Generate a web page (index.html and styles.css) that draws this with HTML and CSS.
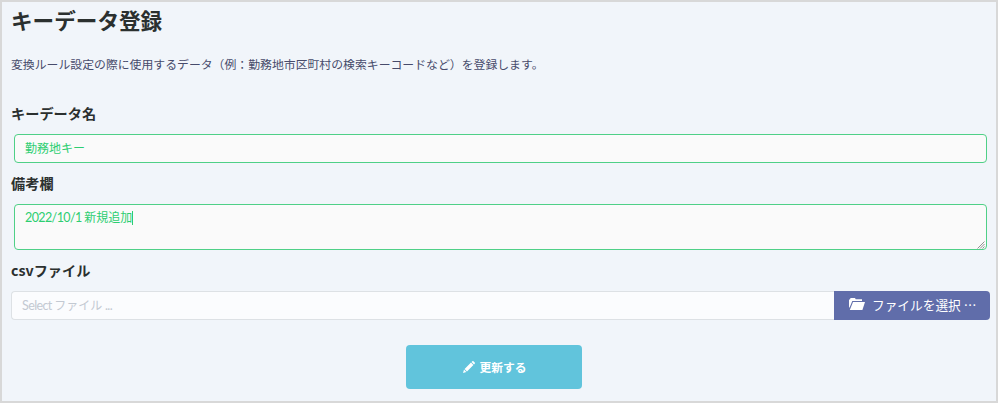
FILE: index.html
```
<!doctype html>
<html lang="ja">
<head>
  <meta charset="utf-8">
  <title>キーデータ登録</title>
  <link rel="stylesheet" href="styles.css">
</head>
<body>
  <main class="page">
    <h1>キーデータ登録</h1>
    <p class="lead">変換ルール設定の際に使用するデータ（例：勤務地市区町村の検索キーコードなど）を登録します。</p>

    <form>
      <label for="keyName">キーデータ名</label>
      <input type="text" class="form-control is-valid" id="keyName" value="勤務地キー">

      <label for="remarks">備考欄</label>
      <div class="textarea-wrap">
        <div class="form-control is-valid remarks" id="remarks" role="textbox"><span class="latin">2022/10/1 </span>新規追加<span class="caret"></span></div>
        <svg class="grip" width="8" height="8" viewBox="0 0 8 8"><path d="M0.500 7.5L7.5 0.500M3 7.5L7.5 3M5.500 7.5L7.5 5.500"/></svg>
      </div>

      <label>csvファイル</label>
      <div class="file-group">
        <div class="file-caption"><span class="latin">Select </span>ファイル<span class="latin"> ...</span></div>
        <button type="button" class="btn-file">
          <svg class="icon-folder" viewBox="0 0 16 12"><path d="M0 10V1.500h1L1.500 0H6l.7 1.300H13V3H3.300L1 8.500zM4 4h12l-2.600 8H.8z"/></svg>
          <span>ファイルを選択 …</span>
        </button>
      </div>

      <div class="actions">
        <button type="button" class="btn-update">
          <svg class="icon-pencil" viewBox="0 0 12 12"><path d="M0 12l1-3.400L3.400 11zM1.600 8L8 1.600 10.400 4 4 10.400zM8.600 1l.7-.7q.6-.6 1.200 0l1.200 1.200q.6.6 0 1.200l-.7.7z"/></svg>
          <span>更新する</span>
        </button>
      </div>
    </form>
  </main>
</body>
</html>
```
FILE: styles.css
```
* {
  box-sizing: border-box;
}

body {
  margin: 0;
  font-family: Lato, "Noto Sans CJK JP", sans-serif;
  font-size: 12px;
  color: #474b6b;
}

.page {
  height: 403px;
  padding: 3px 6px 0 9px;
  border: 2px solid #d8d8d8;
  background: #f1f5fa;
}

h1 {
  margin: 0;
  font-size: 21.600px;
  line-height: 32px;
  color: #2b302f;
}

.lead {
  margin: 18px 0 28px;
  font-size: 11.870px;
  line-height: 20px;
}

label {
  display: block;
  height: 20px;
  margin-bottom: 11px;
  font-family: "Noto Sans CJK JP", sans-serif;
  font-size: 14.200px;
  font-weight: bold;
  line-height: 20px;
  color: #2b302f;
}

.form-control {
  display: block;
  width: 973px;
  height: 29px;
  margin: 0 0 10px 3px;
  padding: 0 10px 2px;
  border: 1px solid #4fd087;
  border-radius: 4px;
  background: #fafafa;
  font: inherit;
  line-height: 26px;
  color: #2dce71;
}

.textarea-wrap {
  position: relative;
}

.remarks {
  height: 46px;
}

.latin {
  font-size: 12.500px;
  letter-spacing: -0.600px;
}

.caret {
  display: inline-block;
  width: 1px;
  height: 14px;
  vertical-align: -3px;
  background: #2dce71;
}

.grip {
  position: absolute;
  right: 5px;
  bottom: 1px;
  fill: none;
  stroke: #777;
  stroke-width: .8;
}

.file-group {
  display: flex;
  width: 979px;
  height: 29px;
}

.file-caption {
  width: 823px;
  padding-left: 10px;
  border: 1px solid #dde1e5;
  border-right: 0;
  border-radius: 4px 0 0 4px;
  background: #fbfcfe;
  line-height: 27px;
  color: #c3c9d2;
}

.btn-file {
  display: flex;
  flex: 1;
  align-items: center;
  padding: 0 0 3px 15px;
  border: 0;
  border-radius: 0 4px 4px 0;
  background: #606daa;
  font-family: "Noto Sans CJK JP", sans-serif;
  font-size: 12.700px;
  white-space: nowrap;
  color: #fff;
}

.icon-folder {
  width: 16px;
  height: 12px;
  margin-right: 7px;
  fill: currentColor;
}

.actions {
  display: flex;
  justify-content: center;
  width: 966px;
  margin-top: 25px;
}

.btn-update {
  display: flex;
  align-items: center;
  justify-content: center;
  gap: 4px;
  width: 176px;
  height: 44px;
  padding: 0 0 1px 2px;
  border: 0;
  border-radius: 4px;
  background: #61c4dc;
  font: inherit;
  font-size: 11.800px;
  font-weight: bold;
  color: #fff;
}

.icon-pencil {
  width: 12px;
  height: 12px;
  fill: currentColor;
}
```
